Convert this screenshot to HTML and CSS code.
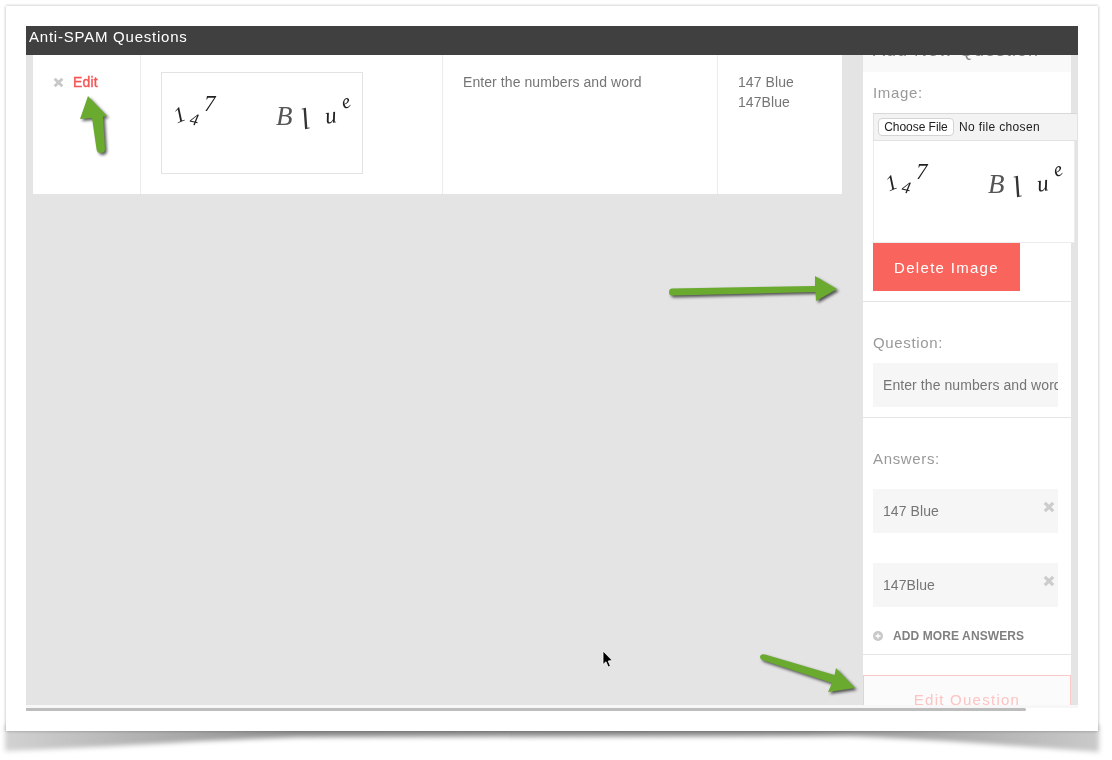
FILE: index.html
```html
<!DOCTYPE html>
<html lang="en">
<head>
<meta charset="utf-8">
<title>Anti-SPAM Questions</title>
<link rel="stylesheet" href="styles.css">
</head>
<body>
<svg class="frame-shadow" viewBox="0 0 1112 760" aria-hidden="true">
  <defs>
    <linearGradient id="sh" x1="0" x2="1" y1="0" y2="0">
      <stop offset="0" stop-color="#d2d2d2"/>
      <stop offset="0.1" stop-color="#b8b8b8"/>
      <stop offset="0.27" stop-color="#8c8c8c"/>
      <stop offset="0.73" stop-color="#8c8c8c"/>
      <stop offset="0.9" stop-color="#b4b4b4"/>
      <stop offset="1" stop-color="#cacaca"/>
    </linearGradient>
  </defs>
  <path class="frame-shadow-shape" fill="url(#sh)" d="M5 725 H1099 V752 C1040 748 950 740 850 736 L300 737 C200 740 100 748 5 751 Z"/>
</svg>
<div class="frame">
  <div class="screen">
    <header class="titlebar">Anti-SPAM Questions</header>
    <div class="content">
      <section class="list">
        <div class="row">
          <div class="cell cell-actions">
            <svg class="x-icon" viewBox="0 0 10 10" aria-hidden="true"><path d="M1.5 1.5 8.5 8.5M8.500 1.5 1.5 8.5"/></svg>
            <a class="edit-link">Edit</a>
          </div>
          <div class="cell cell-image">
            <div class="captcha">
              <span class="g g1">1</span><span class="g g2">4</span><span class="g g3">7</span><span class="g g4">B</span><span class="g g5">l</span><span class="g g6">u</span><span class="g g7">e</span>
            </div>
          </div>
          <div class="cell cell-question">Enter the numbers and word</div>
          <div class="cell cell-answers">147 Blue<br>147Blue</div>
        </div>
      </section>
      <aside class="panel">
        <h2 class="panel-title">Add New Question</h2>
        <div class="group group-image">
          <label class="field-label">Image:</label>
          <input class="file-input" type="file">
          <div class="captcha captcha-wide">
            <span class="g g1">1</span><span class="g g2">4</span><span class="g g3">7</span><span class="g g4">B</span><span class="g g5">l</span><span class="g g6">u</span><span class="g g7">e</span>
          </div>
          <button class="delete-btn" type="button">Delete Image</button>
        </div>
        <div class="group group-question">
          <label class="field-label">Question:</label>
          <input class="text-input" type="text" value="Enter the numbers and word">
        </div>
        <div class="group group-answers">
          <label class="field-label">Answers:</label>
          <div class="answer">
            <input class="text-input" type="text" value="147 Blue">
            <svg class="answer-x" viewBox="0 0 10 10" aria-hidden="true"><path d="M1.5 1.5 8.5 8.5M8.5 1.5 1.5 8.5"/></svg>
          </div>
          <div class="answer">
            <input class="text-input" type="text" value="147Blue">
            <svg class="answer-x" viewBox="0 0 10 10" aria-hidden="true"><path d="M1.5 1.5 8.5 8.5M8.5 1.5 1.5 8.5"/></svg>
          </div>
          <a class="add-more">
            <svg class="plus-icon" viewBox="0 0 10 10" aria-hidden="true"><circle cx="5" cy="5" r="5"/><path d="M5 2.4V7.6M2.4 5H7.6"/></svg>
            ADD MORE ANSWERS
          </a>
        </div>
        <button class="submit-btn" type="button">Edit Question</button>
      </aside>
    </div>
  </div>
  <div class="scroll-track"><div class="scroll-thumb"></div></div>
</div>
<svg class="annotations" viewBox="0 0 1112 760" aria-hidden="true">
  <path class="arrow" d="M88 96 L107 116 L103 116.500 L105 149 Q105 153 100.500 153 Q97 153 96.500 149 L92 118 L80 119 Z"/>
  <path class="arrow" d="M815 276 L837 289 L816 301 L815.500 292 L672 295.500 Q669 295.500 669 292 Q669 288.500 672 288.500 L815 286 Z"/>
  <path class="arrow" d="M836 668 L855 688 L828 692 L832 683 L762 660 Q759 658 760.500 655.500 Q762 653.500 765 654.500 L834.500 675 Z"/>
  <path class="cursor" d="M603 651 V664.500 L606 661.800 L608.200 667 L610.400 666 L608.200 661 L612.300 660.600 Z"/>
</svg>
</body>
</html>
```
FILE: styles.css
```css
* { box-sizing: border-box; }
html, body { margin: 0; height: 760px; overflow: hidden; background: #fff; }
body { font-family: "Liberation Sans", Arial, sans-serif; color: #757575; position: relative; }

.frame-shadow { position: absolute; left: 0; top: 0; width: 1112px; height: 760px; }
.frame-shadow-shape { filter: blur(2.5px); }

.frame {
  position: relative;
  margin: 6px 0 0 6px;
  width: 1092px;
  height: 725px;
  padding: 20px;
  background: #fff;
  box-shadow: 0 0 3px rgba(0, 0, 0, .3);
}

.screen {
  width: 1052px;
  height: 679px;
  overflow: hidden;
  background: #e4e4e4;
  display: flex;
  flex-direction: column;
  filter: blur(.3px);
}
.titlebar {
  position: relative;
  z-index: 2;
  flex: none;
  height: 29px;
  padding: 2px 3px 0;
  background: #404040;
  color: #fff;
  font-size: 15px;
  line-height: 18px;
  letter-spacing: .77px;
}
.content { flex: 1; min-height: 0; display: flex; align-items: flex-start; }

.list { flex: none; width: 837px; padding-left: 7px; }
.row { display: flex; background: #fff; height: 139px; width: 809px; font-size: 14px; line-height: 20px; letter-spacing: .08px; }
.cell { border-right: 1px solid #ececec; }
.cell-actions { width: 108px; padding: 17px 0 0 20px; display: flex; align-items: flex-start; gap: 9px; }
.x-icon { width: 11px; height: 11px; margin-top: 5px; fill: none; stroke: #c8c8c8; stroke-width: 2.6; }
.edit-link { color: #f75555; font-weight: 400; letter-spacing: .15px; -webkit-text-stroke: .4px #f75555; }
.cell-image { width: 302px; padding: 17px 0 0 20px; }
.cell-question { width: 275px; padding: 17px 0 0 20px; }
.cell-answers { width: 124px; padding: 17px 0 0 20px; border-right: 0; }

.captcha {
  position: relative;
  width: 202px;
  height: 102px;
  background: #fff;
  border: 1px solid #e3e3e3;
  overflow: hidden;
}
.captcha-wide { border-top: 0; border-color: #ececec; }
.g {
  position: absolute;
  font-family: "Liberation Serif", serif;
  font-style: italic;
  color: #222;
  font-size: 22px;
  line-height: 24px;
}
.g1 { left: 12px; top: 30px; transform: rotate(-22deg); }
.g2 { left: 28px; top: 35px; font-size: 17px; transform: rotate(12deg); }
.g3 { left: 42px; top: 19px; font-size: 23px; }
.g4 { left: 114px; top: 31px; font-size: 27px; color: #555; }
.g5 { left: 139px; top: 34px; font-size: 30px; transform: rotate(-14deg); color: #333; }
.g6 { left: 163px; top: 31px; font-size: 23px; transform: rotate(-8deg); }
.g7 { left: 179px; top: 16px; font-size: 20px; transform: rotate(-22deg); }

.panel {
  flex: none;
  position: relative;
  z-index: 1;
  width: 208px;
  margin-top: -20px;
  height: 650px;
  background: #fff;
}
.panel-title {
  margin: 0;
  height: 37px;
  padding: 4px 10px 0;
  background: #f9f9f9;
  color: #888;
  font-size: 18px;
  line-height: 22px;
  font-weight: 400;
  letter-spacing: 1px;
  white-space: nowrap;
}
.group { padding: 0 10px; border-bottom: 1px solid #e5e5e5; }
.group-image { height: 230px; padding-top: 12px; }
.group-question { height: 116px; padding-top: 32px; }
.group-answers { height: 237px; padding-top: 32px; }
.field-label {
  display: block;
  color: #999;
  font-size: 15px;
  line-height: 18px;
  letter-spacing: .65px;
}
.file-input {
  display: block;
  margin-top: 11px;
  width: 205px;
  height: 28px;
  padding: 4px 0 0 4px;
  background: #f3f3f3;
  border: 1px solid #e2e2e2;
  border-top-color: #d8d8d8;
  font-family: "Liberation Sans", Arial, sans-serif;
  font-size: 12px;
  line-height: 16px;
  letter-spacing: .35px;
  color: #222;
  overflow: hidden;
}
.file-input::file-selector-button {
  width: 76px;
  height: 18px;
  margin-right: 5px;
  padding: 0;
  background: #fff;
  border: 1px solid #d4d4d4;
  border-radius: 4px;
  color: #222;
  font: inherit;
  letter-spacing: -.05px;
}
.delete-btn {
  display: block;
  width: 147px;
  height: 48px;
  padding: 0;
  background: #f9655c;
  border: 0;
  color: #fff;
  font-family: "Liberation Sans", Arial, sans-serif;
  font-size: 15px;
  letter-spacing: 1.3px;
}
.text-input {
  display: block;
  width: 185px;
  height: 44px;
  margin-top: 11px;
  padding: 0 0 0 10px;
  background: #f6f6f6;
  border: 0;
  outline: 0;
  color: #757575;
  font-family: "Liberation Sans", Arial, sans-serif;
  font-size: 14px;
  letter-spacing: .08px;
}
.answer { position: relative; margin-bottom: 30px; }
.answer .text-input { margin-top: 0; }
.group-answers .field-label { margin-bottom: 21px; }
.answer-x {
  position: absolute;
  left: 170px;
  top: 12px;
  width: 12px;
  height: 12px;
  fill: none;
  stroke: #ccc;
  stroke-width: 2.6;
}
.add-more {
  display: flex;
  align-items: center;
  gap: 10px;
  margin-top: -9px;
  color: #808080;
  font-size: 12px;
  font-weight: 700;
  line-height: 16px;
  letter-spacing: .1px;
  white-space: nowrap;
}
.plus-icon { width: 10px; height: 10px; flex: none; fill: #c8c8c8; }
.plus-icon path { fill: none; stroke: #fff; stroke-width: 1.4; }
.submit-btn {
  display: block;
  width: 208px;
  height: 60px;
  margin-top: 20px;
  padding: 0 0 12px;
  background: #fbfbfb;
  border: 1px solid #fbc9c7;
  color: #fcc4c2;
  font-family: "Liberation Sans", Arial, sans-serif;
  font-size: 15px;
  letter-spacing: 1.25px;
}

.scroll-track { width: 1052px; height: 6px; background: linear-gradient(#f7f7f7 50%, transparent 50%); padding-top: 3px; }
.scroll-thumb { width: 1000px; height: 3px; background: #bdbdbd; border-radius: 0 2px 2px 0; }

.annotations { position: absolute; left: 0; top: 0; width: 1112px; height: 760px; z-index: 5; pointer-events: none; }
.arrow { fill: #6aaa2f; filter: drop-shadow(2px 2px 1.5px rgba(0, 0, 0, .65)); }
.cursor { fill: #000; stroke: #fff; stroke-width: .8; }
```
